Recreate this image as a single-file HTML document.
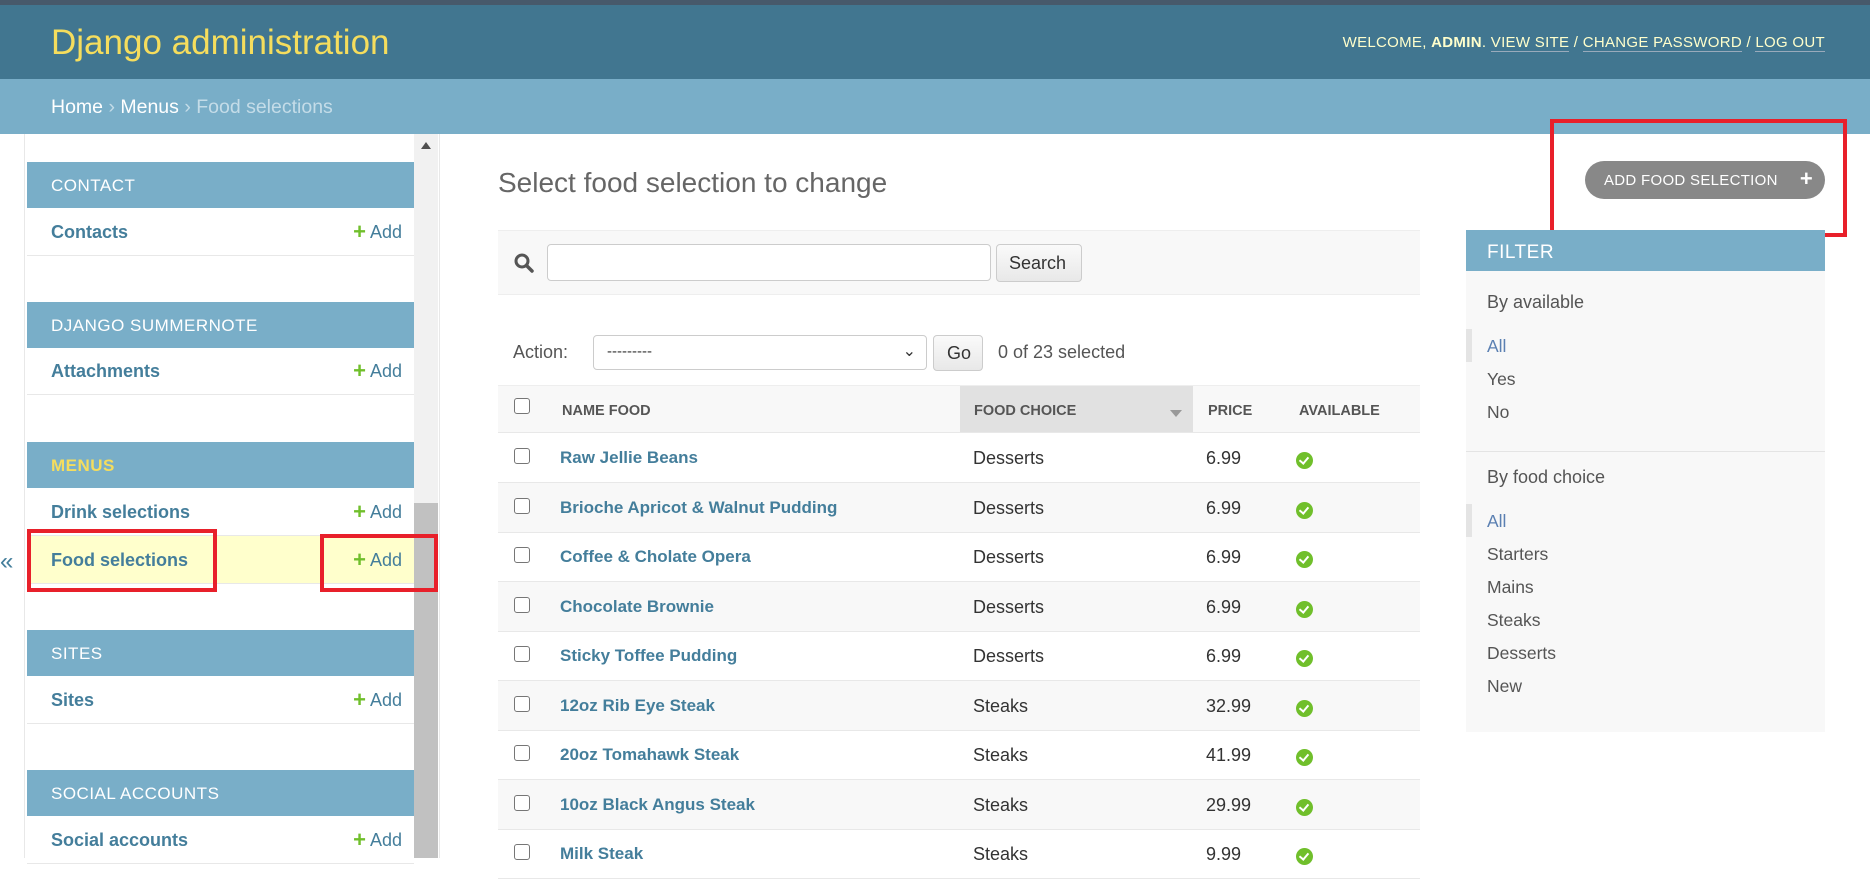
<!DOCTYPE html>
<html><head><meta charset="utf-8"><style>
*{box-sizing:border-box;margin:0;padding:0}
body{width:1870px;height:858px;overflow:hidden;background:#fff;font-family:"Liberation Sans",Arial,sans-serif;color:#333;position:relative}
.a{position:absolute;white-space:nowrap}
#top{left:0;top:0;width:1870px;height:5px;background:#47596b}
#hdr{left:0;top:5px;width:1870px;height:74px;background:#417690}
#bc{left:0;top:79px;width:1870px;height:55px;background:#79aec8}
.cap{position:absolute;left:27px;width:387px;height:46px;background:#79aec8;color:#fff;font-size:17px;letter-spacing:.5px;padding:14px 0 0 24px}
.row{position:absolute;left:27px;width:387px;height:48px;border-bottom:1px solid #e8e8e8;font-size:18px}
.row b{position:absolute;left:24px;top:14px;color:#447e9b}
.row span{position:absolute;right:12px;top:14px;color:#447e9b}
.row span i{font-style:normal;color:#70bf2b;font-weight:bold;margin-right:4px;font-size:22px;line-height:18px;position:relative;top:1px}
.red{position:absolute;border:4px solid #e8202a}
.tr{position:absolute;left:498px;width:922px;height:50px;border-bottom:1px solid #e8e8e8;font-size:18px}
.tr .cb{position:absolute;left:16px;top:15px;width:16px;height:16px;border:1.5px solid #767676;border-radius:3px;background:#fff}
.tr .n{position:absolute;left:62px;top:15px;color:#447e9b;font-weight:bold;font-size:17px}
.tr .c{position:absolute;left:475px;top:15px;color:#333}
.tr .p{position:absolute;left:708px;top:15px;color:#333}
.tr .ok{position:absolute;left:798px;top:19px;width:17px;height:17px;border-radius:50%;background:#70bf2b}
.tr .ok:after{content:"";position:absolute;left:5px;top:3px;width:4px;height:7px;border:solid #fff;border-width:0 2.5px 2.5px 0;transform:rotate(40deg)}
.f{position:absolute;left:1487px;font-size:18px;color:#555}
</style></head><body>
<div class="a" id="top"></div>
<div class="a" id="hdr"></div>
<div class="a" style="left:51px;top:23px;font-size:35px;color:#f5dd5d">Django administration</div>
<div class="a" style="right:45px;top:34px;font-size:15px;color:#ffc;letter-spacing:.3px">WELCOME, <b style="color:#ffc">ADMIN</b>. <span style="border-bottom:1px solid #9ab">VIEW SITE</span> / <span style="border-bottom:1px solid #9ab">CHANGE PASSWORD</span> / <span style="border-bottom:1px solid #9ab">LOG OUT</span></div>
<div class="a" id="bc"></div>
<div class="a" style="left:51px;top:96px;font-size:19.5px;color:#fff">Home <span style="color:#c4dce8">›</span> Menus <span style="color:#c4dce8">› Food selections</span></div>

<!-- sidebar -->
<div class="a" style="left:24px;top:134px;width:1px;height:724px;background:#e8e8e8"></div>
<div class="a" style="left:414px;top:134px;width:24px;height:724px;background:#f1f1f1"></div>
<div class="a" style="left:414px;top:503px;width:24px;height:355px;background:#c1c1c1"></div>
<div class="a" style="left:421px;top:142px;width:0;height:0;border-left:5px solid transparent;border-right:5px solid transparent;border-bottom:7px solid #505050"></div>
<div class="a" style="left:439px;top:134px;width:1px;height:724px;background:#e8e8e8"></div>
<div class="a" style="left:0px;top:548px;font-size:24px;color:#447e9b">«</div>

<div class="cap" style="top:162px">CONTACT</div>
<div class="row" style="top:208px"><b>Contacts</b><span><i>+</i>Add</span></div>
<div class="cap" style="top:302px">DJANGO SUMMERNOTE</div>
<div class="row" style="top:347px"><b>Attachments</b><span><i>+</i>Add</span></div>
<div class="cap" style="top:442px;color:#f5dd5d;font-weight:bold">MENUS</div>
<div class="row" style="top:488px"><b>Drink selections</b><span><i>+</i>Add</span></div>
<div class="row" style="top:536px;background:#ffc"><b>Food selections</b><span><i>+</i>Add</span></div>
<div class="cap" style="top:630px">SITES</div>
<div class="row" style="top:676px"><b>Sites</b><span><i>+</i>Add</span></div>
<div class="cap" style="top:770px">SOCIAL ACCOUNTS</div>
<div class="row" style="top:816px"><b>Social accounts</b><span><i>+</i>Add</span></div>
<div class="red" style="left:27px;top:529px;width:190px;height:63px"></div>
<div class="red" style="left:320px;top:534px;width:118px;height:58px"></div>

<!-- content -->
<div class="a" style="left:498px;top:167px;font-size:28px;color:#666">Select food selection to change</div>
<div class="a" style="left:1585px;top:161px;width:240px;height:38px;border-radius:19px;background:#888;color:#fff;font-size:15px;padding:11px 0 0 19px;letter-spacing:.3px">ADD FOOD SELECTION <b style="font-size:22px;position:absolute;right:12px;top:6px;line-height:24px">+</b></div>
<div class="red" style="left:1550px;top:119px;width:297px;height:118px"></div>

<div class="a" style="left:498px;top:230px;width:922px;height:65px;background:#f8f8f8;border-top:1px solid #eee;border-bottom:1px solid #eee"></div>
<svg class="a" style="left:513px;top:252px" width="22" height="22" viewBox="0 0 22 22"><circle cx="9" cy="9" r="6" fill="none" stroke="#555" stroke-width="3"/><path d="M13.5 13.5L19 19" stroke="#555" stroke-width="3.5" stroke-linecap="round"/></svg>
<div class="a" style="left:547px;top:244px;width:444px;height:37px;background:#fff;border:1px solid #ccc;border-radius:4px"></div>
<div class="a" style="left:996px;top:244px;width:86px;height:38px;background:linear-gradient(#fafafa,#e8e8e8);border:1px solid #ccc;border-radius:4px;font-size:18px;padding:8px 0 0 12px">Search</div>

<div class="a" style="left:513px;top:342px;font-size:18px;color:#555">Action:</div>
<div class="a" style="left:593px;top:335px;width:334px;height:35px;background:#fff;border:1px solid #ccc;border-radius:4px;font-size:15px;padding:7px 0 0 13px">---------<span style="position:absolute;right:10px;top:5px;font-size:16px">⌄</span></div>
<div class="a" style="left:933px;top:335px;width:50px;height:36px;background:linear-gradient(#fafafa,#e8e8e8);border:1px solid #ccc;border-radius:4px;font-size:18px;padding:7px 0 0 13px">Go</div>
<div class="a" style="left:998px;top:342px;font-size:18px;color:#555">0 of 23 selected</div>

<!-- table header -->
<div class="a" style="left:498px;top:385px;width:922px;height:48px;background:#f8f8f8;border-top:1px solid #eee;border-bottom:1px solid #e8e8e8"></div>
<div class="a" style="left:960px;top:386px;width:233px;height:46px;background:#e1e1e1"></div>
<div class="a" style="left:514px;top:398px;width:16px;height:16px;border:1.5px solid #767676;border-radius:3px;background:#fff"></div>
<div class="a" style="left:562px;top:403px;font-size:14.5px;font-weight:bold;color:#555">NAME FOOD</div>
<div class="a" style="left:974px;top:403px;font-size:14.5px;font-weight:bold;color:#555">FOOD CHOICE</div>
<div class="a" style="left:1170px;top:410px;width:0;height:0;border-left:6px solid transparent;border-right:6px solid transparent;border-top:7px solid #999"></div>
<div class="a" style="left:1208px;top:403px;font-size:14.5px;font-weight:bold;color:#555">PRICE</div>
<div class="a" style="left:1299px;top:403px;font-size:14.5px;font-weight:bold;color:#555">AVAILABLE</div>

<div class="tr" style="top:433px"><div class="cb"></div><div class="n">Raw Jellie Beans</div><div class="c">Desserts</div><div class="p">6.99</div><div class="ok"></div></div>
<div class="tr" style="top:483px;background:#f8f8f8"><div class="cb"></div><div class="n">Brioche Apricot &amp; Walnut Pudding</div><div class="c">Desserts</div><div class="p">6.99</div><div class="ok"></div></div>
<div class="tr" style="top:532px"><div class="cb"></div><div class="n">Coffee &amp; Cholate Opera</div><div class="c">Desserts</div><div class="p">6.99</div><div class="ok"></div></div>
<div class="tr" style="top:582px;background:#f8f8f8"><div class="cb"></div><div class="n">Chocolate Brownie</div><div class="c">Desserts</div><div class="p">6.99</div><div class="ok"></div></div>
<div class="tr" style="top:631px"><div class="cb"></div><div class="n">Sticky Toffee Pudding</div><div class="c">Desserts</div><div class="p">6.99</div><div class="ok"></div></div>
<div class="tr" style="top:681px;background:#f8f8f8"><div class="cb"></div><div class="n">12oz Rib Eye Steak</div><div class="c">Steaks</div><div class="p">32.99</div><div class="ok"></div></div>
<div class="tr" style="top:730px"><div class="cb"></div><div class="n">20oz Tomahawk Steak</div><div class="c">Steaks</div><div class="p">41.99</div><div class="ok"></div></div>
<div class="tr" style="top:780px;background:#f8f8f8"><div class="cb"></div><div class="n">10oz Black Angus Steak</div><div class="c">Steaks</div><div class="p">29.99</div><div class="ok"></div></div>
<div class="tr" style="top:829px"><div class="cb"></div><div class="n">Milk Steak</div><div class="c">Steaks</div><div class="p">9.99</div><div class="ok"></div></div>

<!-- filter -->
<div class="a" style="left:1466px;top:230px;width:359px;height:502px;background:#f8f8f8"></div>
<div class="a" style="left:1466px;top:230px;width:359px;height:41px;background:#79aec8;color:#fff;font-size:19px;padding:12px 0 0 21px;letter-spacing:.5px">FILTER</div>
<div class="f" style="top:292px">By available</div>
<div class="a" style="left:1466px;top:329px;width:6px;height:33px;background:#e4e4e4"></div>
<div class="f" style="top:336px;color:#5b80b2;font-size:17.5px">All</div>
<div class="f" style="top:369px;font-size:17.5px">Yes</div>
<div class="f" style="top:402px;font-size:17.5px">No</div>
<div class="a" style="left:1466px;top:451px;width:359px;height:1px;background:#e4e4e4"></div>
<div class="f" style="top:467px">By food choice</div>
<div class="a" style="left:1466px;top:504px;width:6px;height:33px;background:#e4e4e4"></div>
<div class="f" style="top:511px;color:#5b80b2;font-size:17.5px">All</div>
<div class="f" style="top:544px;font-size:17.5px">Starters</div>
<div class="f" style="top:577px;font-size:17.5px">Mains</div>
<div class="f" style="top:610px;font-size:17.5px">Steaks</div>
<div class="f" style="top:643px;font-size:17.5px">Desserts</div>
<div class="f" style="top:676px;font-size:17.5px">New</div>
</body></html>
